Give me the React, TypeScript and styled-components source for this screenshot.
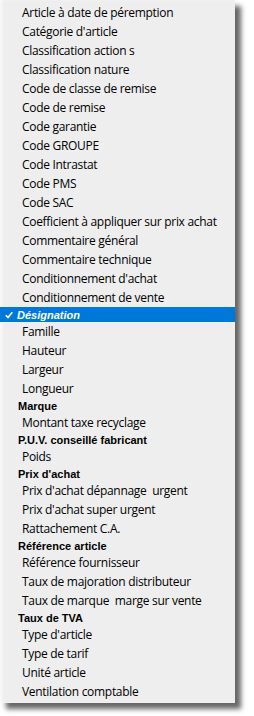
import React from "react";
import styled, { createGlobalStyle } from "styled-components";

const Global = createGlobalStyle`
  html, body { margin: 0; padding: 0; background: #ffffff; }
  * { box-sizing: border-box; }
`;

const Page = styled.div`
  width: 254px;
  height: 716px;
  background: #ffffff;
`;

const Menu = styled.ul`
  list-style: none;
  margin: 0;
  padding: 3px 0 2px 0;
  width: 235px;
  display: flex;
  flex-direction: column;
  background: #eeeeee;
  box-shadow: 6px 6px 5px rgba(0, 0, 0, 0.6), inset 3px 0 4px -2px #ffffff;
`;

type Kind = "normal" | "bold" | "selected";

const Item = styled.li<{ $kind: Kind }>`
  display: flex;
  align-items: center;
  height: ${(p) => (p.$kind === "normal" ? 19 : 15)}px;
  padding-left: ${(p) => (p.$kind === "normal" ? 22 : p.$kind === "bold" ? 18 : 5)}px;
  font-family: ${(p) => (p.$kind === "normal" ? '"Open Sans", "Noto Sans", sans-serif' : '"Liberation Sans", Arial, sans-serif')};
  font-size: ${(p) => (p.$kind === "normal" ? "12px" : "11px")};
  font-weight: ${(p) => (p.$kind === "normal" ? 400 : 700)};
  font-style: ${(p) => (p.$kind === "selected" ? "italic" : "normal")};
  color: ${(p) => (p.$kind === "selected" ? "#ffffff" : "#000000")};
  background: ${(p) => (p.$kind === "selected" ? "#0078d7" : "transparent")};
  white-space: pre;
  letter-spacing: ${(p) => (p.$kind === "normal" ? "-0.3px" : "0")};
`;

const Check = styled.svg`
  width: 8px;
  height: 8px;
  margin-right: 4px;
  flex: none;
`;

const items: [string, Kind][] = [
  ["Article à date de péremption", "normal"],
  ["Catégorie d'article", "normal"],
  ["Classification action s", "normal"],
  ["Classification nature", "normal"],
  ["Code de classe de remise", "normal"],
  ["Code de remise", "normal"],
  ["Code garantie", "normal"],
  ["Code GROUPE", "normal"],
  ["Code Intrastat", "normal"],
  ["Code PMS", "normal"],
  ["Code SAC", "normal"],
  ["Coefficient à appliquer sur prix achat", "normal"],
  ["Commentaire général", "normal"],
  ["Commentaire technique", "normal"],
  ["Conditionnement d'achat", "normal"],
  ["Conditionnement de vente", "normal"],
  ["Désignation", "selected"],
  ["Famille", "normal"],
  ["Hauteur", "normal"],
  ["Largeur", "normal"],
  ["Longueur", "normal"],
  ["Marque", "bold"],
  ["Montant taxe recyclage", "normal"],
  ["P.U.V. conseillé fabricant", "bold"],
  ["Poids", "normal"],
  ["Prix d'achat", "bold"],
  ["Prix d'achat dépannage  urgent", "normal"],
  ["Prix d'achat super urgent", "normal"],
  ["Rattachement C.A.", "normal"],
  ["Référence article", "bold"],
  ["Référence fournisseur", "normal"],
  ["Taux de majoration distributeur", "normal"],
  ["Taux de marque  marge sur vente", "normal"],
  ["Taux de TVA", "bold"],
  ["Type d'article", "normal"],
  ["Type de tarif", "normal"],
  ["Unité article", "normal"],
  ["Ventilation comptable", "normal"],
];

export default function App() {
  return (
    <Page>
      <Global />
      <Menu>
        {items.map(([label, kind]) => (
          <Item key={label} $kind={kind}>
            {kind === "selected" && (
              <Check viewBox="0 0 8 8">
                <path d="M0.8 4.2 L3 6.5 L7.3 1.2" fill="none" stroke="#ffffff" strokeWidth="1.6" />
              </Check>
            )}
            {label}
          </Item>
        ))}
      </Menu>
    </Page>
  );
}
